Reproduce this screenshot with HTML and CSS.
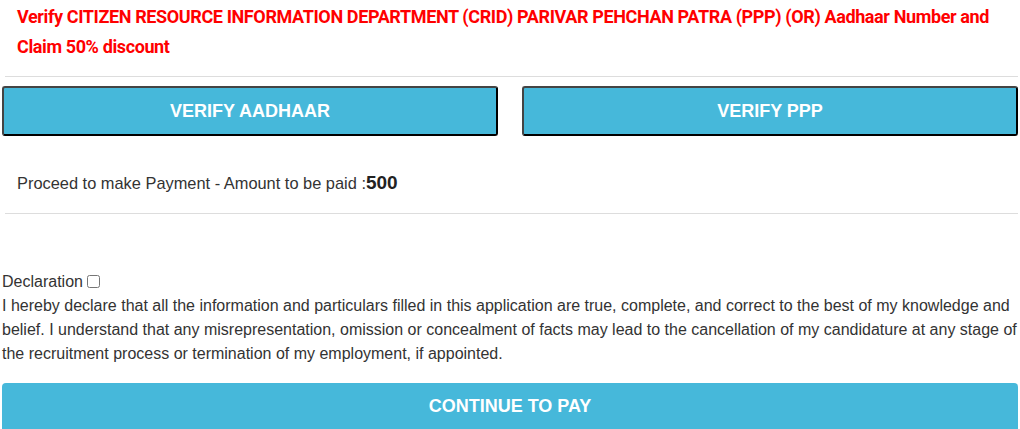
FILE: index.html
```html
<!DOCTYPE html>
<html lang="en">
<head>
    <meta charset="UTF-8">
    <meta name="viewport" content="width=device-width, initial-scale=1.0">
    <title>Payment</title>
    <link rel="stylesheet" href="styles.css">
</head>
<body>
    <div class="container">
        <h4 class="discount-title">Verify CITIZEN RESOURCE INFORMATION DEPARTMENT (CRID) PARIVAR PEHCHAN PATRA (PPP) (OR) Aadhaar Number and Claim 50% discount</h4>
        <hr class="divider">

        <div class="verify-row">
            <button type="button" class="verify-btn">VERIFY AADHAAR</button>
            <button type="button" class="verify-btn">VERIFY PPP</button>
        </div>

        <p class="amount">Proceed to make Payment - Amount to be paid :<b>500</b></p>
        <hr class="divider">

        <div class="declaration">
            <label class="declaration-label">Declaration <input type="checkbox" id="declare"></label>
            <p>I hereby declare that all the information and particulars filled in this application are true, complete, and correct to the best of my knowledge and belief. I understand that any misrepresentation, omission or concealment of facts may lead to the cancellation of my candidature at any stage of the recruitment process or termination of my employment, if appointed.</p>
        </div>

        <button type="button" class="pay-btn">CONTINUE TO PAY</button>
    </div>
</body>
</html>
```

FILE: styles.css
```css
* {
    margin: 0;
    padding: 0;
    box-sizing: border-box;
}

body {
    background: #fff;
    color: #333;
    font-family: 'Liberation Sans', Arial, sans-serif;
    font-size: 16px;
}

.container {
    width: 1020px;
    padding: 2px 2px 0 2px;
}

.discount-title {
    color: #f00;
    font-family: Roboto, 'Liberation Sans', sans-serif;
    font-weight: bold;
    font-size: 18px;
    letter-spacing: -0.38px;
    line-height: 30px;
    padding-left: 15px;
}

.divider {
    border: none;
    border-top: 1px solid #ddd;
    margin-left: 3px;
}

.discount-title + .divider {
    margin-top: 14px;
}

.verify-row {
    display: grid;
    grid-template-columns: 1fr 1fr;
    gap: 24px;
    margin-top: 9px;
}

.verify-btn {
    height: 50px;
    background: #46b8da;
    color: #fff;
    font-family: 'Liberation Sans', Arial, sans-serif;
    font-size: 18px;
    font-weight: bold;
    border: 2px outset #444;
    border-right-color: #000;
    border-bottom-color: #000;
    border-radius: 3px;
    cursor: pointer;
}

.amount {
    padding-left: 15px;
    margin-top: 36px;
    line-height: 22px;
    font-size: 16.4px;
}

.amount b {
    font-size: 19px;
    color: #222;
}

.amount + .divider {
    margin-top: 19px;
}

.declaration {
    margin-top: 56px;
    line-height: 24px;
}

.declaration-label input {
    width: 13px;
    height: 13px;
    vertical-align: -1px;
}

.pay-btn {
    display: block;
    width: 100%;
    height: 47px;
    margin-top: 17px;
    background: #46b8da;
    color: #fff;
    border: none;
    border-radius: 4px 4px 0 0;
    font-family: 'Liberation Sans', Arial, sans-serif;
    font-size: 18px;
    font-weight: bold;
    cursor: pointer;
}
```
